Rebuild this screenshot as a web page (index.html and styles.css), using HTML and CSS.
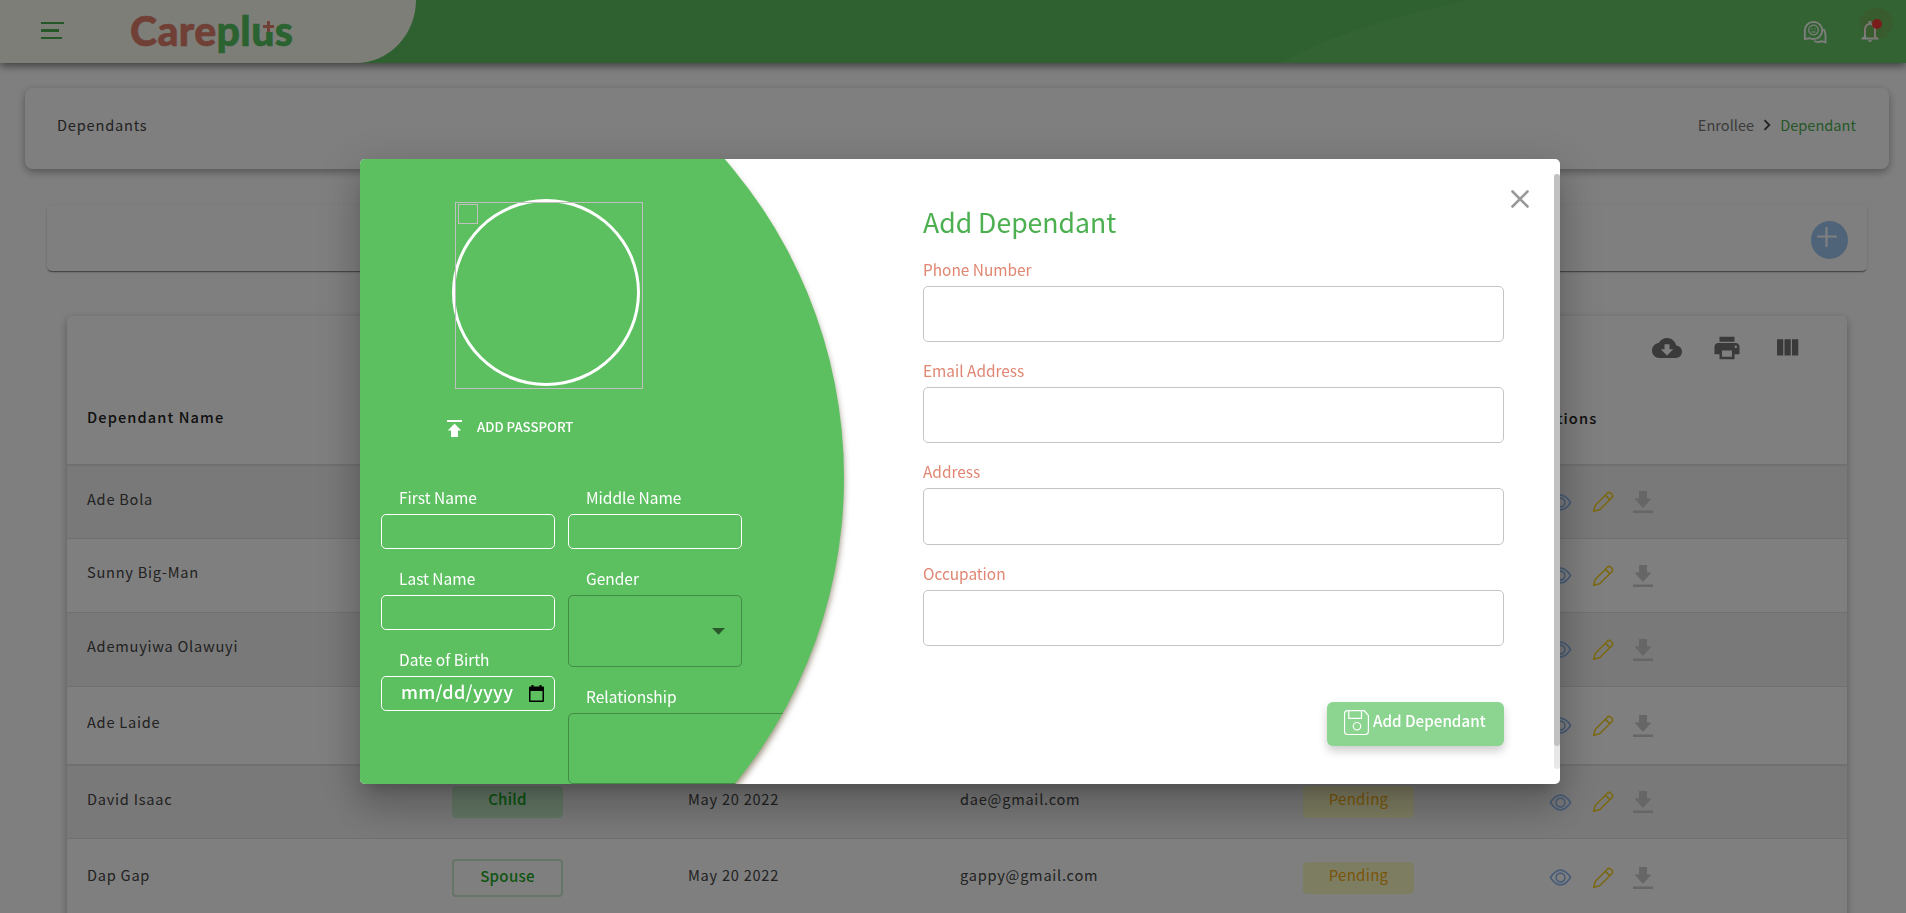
FILE: index.html
```html
<!DOCTYPE html>
<html lang="en">
<head>
<meta charset="utf-8">
<title>Careplus - Dependants</title>
<link rel="stylesheet" href="styles.css">
</head>
<body>
<svg class="sprite" aria-hidden="true">
  <symbol id="eye" viewBox="0 0 24 24"><g fill="none" stroke="currentColor" stroke-width="1.7"><path d="M1.5 12C5.500 5.800 9 4.300 12 4.300S18.500 5.800 22.500 12C18.500 18.200 15 19.700 12 19.700S5.500 18.200 1.500 12z"/><circle cx="12" cy="12" r="4.600"/></g></symbol>
  <symbol id="pencil" viewBox="0 0 24 24"><g fill="none" stroke="currentColor" stroke-width="1.700" stroke-linejoin="round"><path d="M1.800 22.200l1.700-6.400L16.800 2.500c1-1 2.700-1 3.700 0l1.100 1.100c1 1 1 2.700 0 3.700L8.300 20.500 1.800 22.200zM14.700 4.800l4.600 4.600"/></g></symbol>
  <symbol id="download" viewBox="0 0 20 22"><path fill="currentColor" d="M6 0h8v7.500h4.500L10 17 1.500 7.500H6zM0 19.500h20V22H0z"/></symbol>
</svg>

<header class="topbar">
  <div class="brand">
    <svg class="menu" viewBox="0 0 23 17" width="23" height="17"><path fill="#4caf50" d="M0 0h23v2H0zM0 7h18v3H0zM0 15h21v2H0z"/></svg>
    <div class="logo"><span class="logo-care">Care</span><span class="logo-plus">plus</span><span class="logo-cross"></span></div>
  </div>
  <div class="swoosh"></div>
  <div class="top-icons">
    <svg class="chat" viewBox="0 0 24 24" width="24" height="24"><g fill="none" stroke="#fff" stroke-width="1.800"><path d="M1.800 19V10.500a8.700 8.700 0 1 1 8.700 8.700c-1.500 0-2.700-.4-3.800-.9z"/><circle cx="10.500" cy="10" r="4.800" stroke-width="1.200"/><path d="M20.500 9c2 3 2.200 5 2 13.500l-3.500-1.300c-3 1.300-6 .8-8-.2"/></g><path d="M8.500 9h1M11.500 9h1M8.500 12h4" stroke="#fff"/></svg>
    <div class="bell-wrap">
      <svg viewBox="0 0 18 21" width="18" height="21"><path fill="#fff" d="M7.500 0h3v2.300C13.500 3 15 5.500 15 8.500V15.500l2.500 1.500v1.500H.5V17L3 15.500V8.500c0-3 1.500-5.500 4.500-6.200zM9 4C6.500 4 5 6 5 8.500V16.500h8v-8C13 6 11.500 4 9 4zM7 19.300h4c0 1-1 1.700-2 1.700s-2-.7-2-1.700z"/></svg>
      <span class="halo"></span><span class="dot"></span>
    </div>
  </div>
</header>

<main>
  <section class="crumbs">
    <h1 class="page-title">Dependants</h1>
    <nav class="trail"><span>Enrollee</span><svg viewBox="0 0 8 12" width="8" height="12"><path d="M1.500 1.200L6.300 6 1.500 10.800" fill="none" stroke="#444" stroke-width="1.800"/></svg><span class="here">Dependant</span></nav>
  </section>
  <section class="addbar"><button class="plus"><svg viewBox="0 0 20 20" width="20" height="20"><path d="M9.500 1v18M1 9.500h18" stroke="#fff" stroke-width="2.200" stroke-linecap="round"/></svg></button></section>
  <section class="table">
    <div class="tools">
      <svg viewBox="0 0 24 24"><path d="M19.350 10.040C18.670 6.590 15.640 4 12 4 9.110 4 6.600 5.640 5.350 8.040 2.340 8.360 0 10.910 0 14c0 3.310 2.690 6 6 6h13c2.760 0 5-2.240 5-5 0-2.640-2.050-4.780-4.650-4.960zM17 13l-5 5-5-5h3V9h4v4h3z"/></svg>
      <svg viewBox="0 0 24 24"><path d="M19 8H5c-1.660 0-3 1.340-3 3v6h4v4h12v-4h4v-6c0-1.660-1.340-3-3-3zm-3 11H8v-5h8v5zm3-7c-.55 0-1-.45-1-1s.45-1 1-1 1 .45 1 1-.45 1-1 1zm-1-9H6v4h12V3z"/></svg>
      <svg viewBox="0 0 24 24"><path d="M10 18h5V5h-5v13zm-6 0h5V5H4v13zM16 5v13h5V5h-5z"/></svg>
    </div>
    <div class="row head"><span>Dependant Name</span><span></span><span></span><span></span><span></span><span class="act-head">Actions</span></div>
    <div class="row odd first"><span>Ade Bola</span><span></span><span></span><span></span><span></span><div class="acts"><svg class="eye"><use href="#eye"/></svg><svg class="pen"><use href="#pencil"/></svg><svg class="dl"><use href="#download"/></svg></div></div>
    <div class="row"><span>Sunny Big-Man</span><span></span><span></span><span></span><span></span><div class="acts"><svg class="eye"><use href="#eye"/></svg><svg class="pen"><use href="#pencil"/></svg><svg class="dl"><use href="#download"/></svg></div></div>
    <div class="row odd"><span>Ademuyiwa Olawuyi</span><span></span><span></span><span></span><span></span><div class="acts"><svg class="eye"><use href="#eye"/></svg><svg class="pen"><use href="#pencil"/></svg><svg class="dl"><use href="#download"/></svg></div></div>
    <div class="row tall"><span>Ade Laide</span><span></span><span></span><span></span><span></span><div class="acts"><svg class="eye"><use href="#eye"/></svg><svg class="pen"><use href="#pencil"/></svg><svg class="dl"><use href="#download"/></svg></div></div>
    <div class="row odd first"><span>David Isaac</span><div class="badge child">Child</div><span>May 20 2022</span><span>dae@gmail.com</span><div class="badge pending">Pending</div><div class="acts"><svg class="eye"><use href="#eye"/></svg><svg class="pen"><use href="#pencil"/></svg><svg class="dl"><use href="#download"/></svg></div></div>
    <div class="row tall last"><span>Dap Gap</span><div class="badge spouse">Spouse</div><span>May 20 2022</span><span>gappy@gmail.com</span><div class="badge pending">Pending</div><div class="acts"><svg class="eye"><use href="#eye"/></svg><svg class="pen"><use href="#pencil"/></svg><svg class="dl"><use href="#download"/></svg></div></div>
  </section>
</main>

<div class="backdrop">
  <div class="modal">
    <div class="disc"></div>
    <div class="left">
      <div class="photo"><div class="ring"></div><div class="frame"><div class="broken"></div></div></div>
      <div class="upload"><svg viewBox="0 0 15 17" width="15" height="17"><path fill="#fff" d="M0 0h15v2H0zM7.500 3.500L14.200 10.500H11V17H4V10.500H.8z"/></svg><span>ADD PASSPORT</span></div>
      <div class="fields">
        <div class="col">
          <label>First Name</label><div class="box"></div>
          <label>Last Name</label><div class="box"></div>
          <label>Date of Birth</label><div class="box datebox"><span>mm/dd/yyyy</span><svg viewBox="0 0 15 17" width="15" height="17"><path d="M2.500 0h2v1.500h6V0h2v1.500H14a1 1 0 0 1 1 1V16a1 1 0 0 1-1 1H1a1 1 0 0 1-1-1V2.500a1 1 0 0 1 1-1h1.500zM1.500 6v9.500h12V6z"/></svg></div>
        </div>
        <div class="col">
          <label>Middle Name</label><div class="box"></div>
          <label>Gender</label><div class="select"><svg viewBox="0 0 13 7" width="13" height="7"><path d="M0 0h13L6.500 6.700z" fill="#000" fill-opacity=".54"/></svg></div>
          <label>Relationship</label><div class="select wide"></div>
        </div>
      </div>
    </div>
    <div class="right">
      <h2>Add Dependant</h2>
      <label>Phone Number</label><div class="input"></div>
      <label>Email Address</label><div class="input"></div>
      <label>Address</label><div class="input"></div>
      <label>Occupation</label><div class="input"></div>
      <button class="submit"><svg viewBox="0 0 25 25" width="25" height="25"><g fill="none" stroke="#fff" stroke-width="1.200"><path d="M3.500.6H20.200L24.400 5.500V21.500a3 3 0 0 1-3 3H3.500a3 3 0 0 1-3-3V3.600a3 3 0 0 1 3-3z"/><path d="M4.800.6V8.300H17.500V.6"/><circle cx="13" cy="16.200" r="3.700"/></g></svg><span>Add Dependant</span></button>
    </div>
    <svg class="close" viewBox="0 0 18 18" width="18" height="18"><path d="M1.500 1.500l15 15M16.500 1.500l-15 15" stroke="#999" stroke-width="2.600" stroke-linecap="round"/></svg>
    <div class="scroll"><div class="thumb"></div></div>
  </div>
</div>
</body>
</html>
```
FILE: styles.css
```css
* { box-sizing: border-box; }
body { margin: 0; height: 913px; overflow: hidden; background: #fff; font: 16px/24px "Noto Sans CJK SC", "Open Sans", sans-serif; color: #444; }
.sprite { display: none; }
button { border: 0; padding: 0; font: inherit; }
h1, h2 { margin: 0; font-weight: 400; }

.topbar { position: relative; height: 63px; background: #5cc060; display: flex; justify-content: space-between; box-shadow: 0 3px 8px rgba(0,0,0,.5); }
.brand { width: 416px; background: #fdfdf0; border-bottom-right-radius: 60px 63px; display: flex; align-items: flex-start; padding: 22px 0 0 41px; }
.logo { position: relative; margin: -13px 0 0 66px; font: 900 41px/44px Lato, sans-serif; letter-spacing: .4px; white-space: nowrap; -webkit-text-stroke: .6px; }
.logo-care { color: #e0806c; }
.logo-plus { color: #55c460; }
.logo-cross { position: absolute; left: 133px; top: 12px; width: 11px; height: 11px; background: linear-gradient(#e0806c,#e0806c) center/11px 3px no-repeat, linear-gradient(#e0806c,#e0806c) center/3px 11px no-repeat, #fdfdf0; }
.swoosh { position: absolute; right: 0; top: 0; width: 640px; height: 63px; background: radial-gradient(ellipse 660px 168px at 620px 130px, #66c566 99.800%, transparent 100%); }
.top-icons { position: relative; display: flex; padding: 20px 27px 0 0; gap: 34px; }
.bell-wrap { position: relative; padding-top: 1px; width: 18px; }
.halo { position: absolute; left: -1px; top: -12px; width: 33px; height: 31px; border-radius: 50%; background: rgba(200,90,30,.12); }
.dot { position: absolute; left: 11px; top: -1px; width: 10px; height: 10px; border-radius: 50%; background: #f03a35; }

main { padding: 25px 17px 0 25px; }
.crumbs { height: 81px; border-radius: 8px; background: #fff; box-shadow: 0 3px 8px rgba(0,0,0,.35); display: flex; justify-content: space-between; align-items: center; padding: 0 33px 8px 32px; margin-bottom: 36px; }
.page-title { font-size: 14.600px; letter-spacing: .8px; }
.trail { display: flex; align-items: center; gap: 9px; color: #777; font-size: 14.600px; }
.here { color: #4caf50; }
.addbar { height: 66px; margin: 0 22px 45px 22px; border-radius: 5px; background: #fff; box-shadow: 0 2px 1px -1px rgba(0,0,0,.4), 0 1px 3px rgba(0,0,0,.2); display: flex; justify-content: flex-end; padding: 16px 19px 0 0; }
.plus { width: 37px; height: 38px; border-radius: 50%; background: #9ec8f2; padding: 6px 0 0 6px; display: flex; align-items: flex-start; }
.table { margin: 0 42px; border-radius: 5px; background: #fff; box-shadow: 0 3px 8px rgba(0,0,0,.3); height: 620px; }
.tools { display: flex; justify-content: flex-end; gap: 30px; padding: 17px 45px 0 0; height: 56px; }
.tools svg { width: 30px; height: 30px; fill: #757575; }
.row { display: grid; grid-template-columns: 365px 236px 272px 343px 246px 1fr; align-items: center; height: 74px; padding-left: 20px; border-bottom: 1px solid #e0e0e0; font-size: 14.600px; letter-spacing: .75px; }
.row > span { padding-bottom: 7px; }
.first { height: 73px; }
.odd { background: #f2f2f2; }
.tall { height: 79px; border-bottom-width: 2px; }
.last > span { padding-bottom: 5px; }
.head { height: 94px; border-bottom: 2px solid #e0e0e0; font-weight: 500; color: #222; letter-spacing: 1.100px; }
.head > span { padding-bottom: 3px; }
.head > .act-head { margin-left: -11px; padding-bottom: 1px; }
.badge { width: 111px; height: 32px; line-height: 25px; border-radius: 4px; text-align: center; font-weight: 500; font-size: 15px; letter-spacing: .3px; }
.child { background: #c5ecc9; color: #12a51c; }
.spouse { height: 38px; line-height: 30px; border: 2px solid #c8ecd0; color: #1ca824; }
.pending { background: #fafac4; color: #f5ab10; font-weight: 400; }
.acts { display: flex; align-items: center; }
.eye { width: 23px; height: 23px; color: #8fb8f0; }
.pen { width: 22px; height: 22px; margin-left: 20px; color: #f5d020; }
.dl { width: 20px; height: 22px; margin-left: 19px; color: #ccc; }

.backdrop { position: fixed; inset: 0; background: rgba(0,0,0,.5); padding: 159px 0 0 360px; }
.modal { position: relative; width: 1200px; height: 625px; border-radius: 5px; background: #fff; overflow: hidden; display: flex; }
.backdrop::before { content: ""; position: absolute; left: 360px; top: 159px; width: 1200px; height: 625px; border-radius: 5px; box-shadow: 0 11px 15px -7px rgba(0,0,0,.2), 0 24px 38px 3px rgba(0,0,0,.14), 0 9px 46px 8px rgba(0,0,0,.12); }
.disc { position: absolute; left: -485px; top: -166px; width: 969px; height: 969px; border-radius: 50%; background: #5cc060; box-shadow: 0 5px 6px rgba(60,40,0,.5); }
.left { position: relative; width: 485px; height: 625px; clip-path: circle(484.500px at 0 318.500px); overflow: hidden; padding: 40px 0 0 17px; }
.photo { position: relative; height: 190px; margin-left: 75px; width: 191px; }
.ring { position: absolute; left: 0; top: 0; width: 188px; height: 187px; border: 3px solid #fff; border-radius: 50%; }
.frame { position: absolute; left: 3px; top: 3px; width: 188px; height: 187px; border: 1px solid #c0c0c0; padding: 1px 2px; }
.broken { width: 20px; height: 20px; border: 1px solid #c0c0c0; }
.upload { display: flex; align-items: center; height: 24px; margin: 27px 0 0 70px; gap: 15px; font-size: 13.200px; font-weight: 500; color: #fff; }
.upload span { padding-bottom: 2px; }
.fields { display: flex; gap: 13px; margin: 44px 0 0 4px; }
.col { width: 174px; }
.col label { display: block; height: 30px; line-height: 26px; padding-left: 18px; color: #fff; white-space: nowrap; font-size: 15.500px; }
.box { height: 35px; border: 1px solid #fff; border-radius: 5px; margin-bottom: 16px; }
.datebox { display: flex; align-items: center; justify-content: space-between; padding: 0 10px 6px 19px; color: #fff; font-size: 18px; font-weight: 500; letter-spacing: .3px; }
.datebox svg { margin-top: 5px; }
.select { height: 72px; border: 1px solid rgba(0,0,0,.27); border-radius: 5px; margin-bottom: 16px; display: flex; justify-content: flex-end; padding: 32px 16px 0 0; }
.wide { width: 260px; height: 71px; }
.right { width: 581px; margin-left: 78px; padding-top: 43px; display: flex; flex-direction: column; }
.right h2 { font-size: 26.600px; line-height: 40px; color: #4caf50; height: 54px; }
.right label { height: 30px; line-height: 26px; color: #e08672; font-size: 15.400px; }
.input { height: 56.200px; border: 1px solid #c4c4c4; border-radius: 5px; margin-bottom: 15px; }
.submit { width: 177px; height: 44px; align-self: flex-end; margin-top: 41px; border-radius: 6px; background: #8cd590; color: #fff; font-weight: 500; display: flex; align-items: flex-start; padding: 8px 0 0 17px; gap: 4px; box-shadow: 0 5px 10px rgba(0,0,0,.2); }
.submit span { line-height: 20px; white-space: nowrap; font-size: 15.200px; }
.close { position: absolute; left: 1151px; top: 31px; }
.scroll { position: absolute; right: 0; top: 15px; width: 6px; height: 595px; border-radius: 3px; background: #e8e8e8; }
.thumb { height: 572px; border-radius: 3px; background: #c1c1c1; }
```
